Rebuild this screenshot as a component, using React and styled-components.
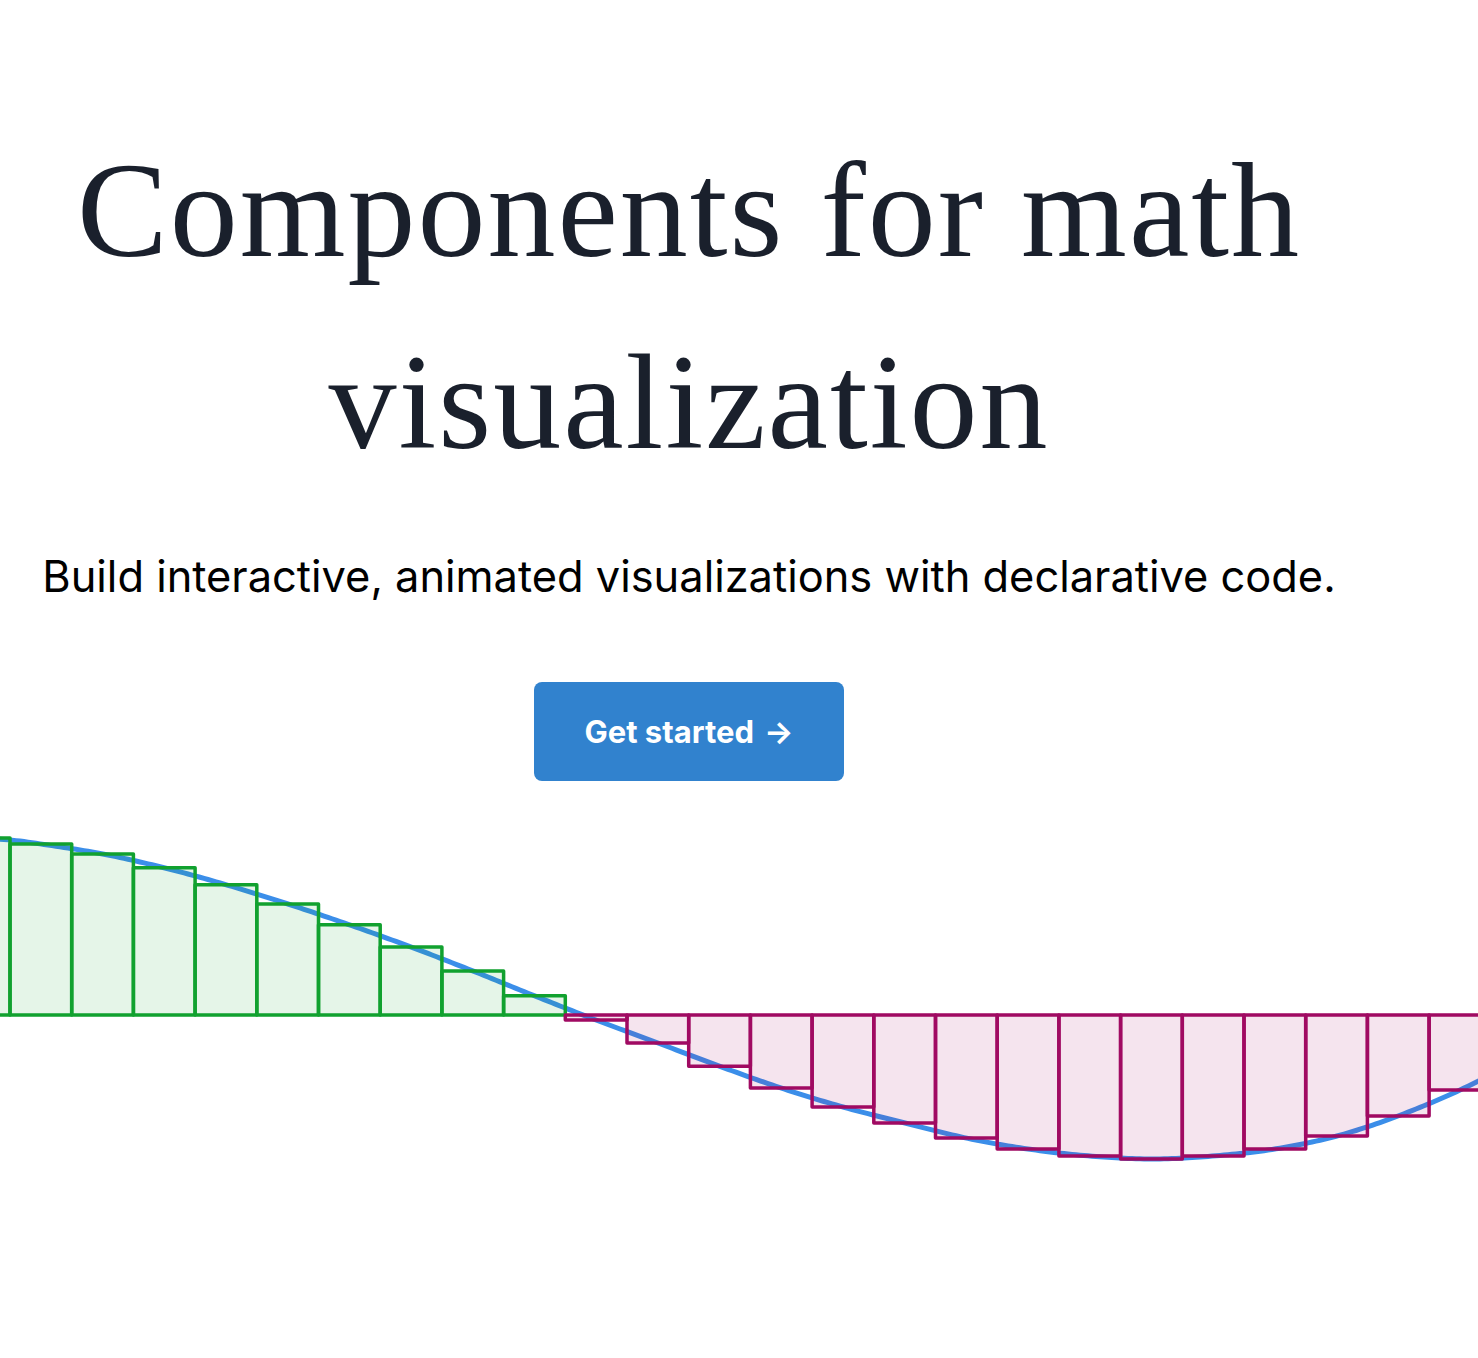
import React from "react"
import styled, { createGlobalStyle } from "styled-components"

const GlobalStyle = createGlobalStyle`
  html, body {
    margin: 0;
    padding: 0;
    background: #ffffff;
  }
`

const Page = styled.main`
  width: 100%;
  min-height: 1358px;
  overflow: hidden;
`

const Hero = styled.section`
  width: 1378px;
  display: flex;
  flex-direction: column;
  align-items: center;
  padding-top: 114px;
`

const Title = styled.h1`
  margin: 0;
  font-family: "Liberation Serif", "Times New Roman", serif;
  font-weight: 400;
  font-size: 136px;
  line-height: 192px;
  letter-spacing: 2px;
  color: #1a202c;
  text-align: center;
`

const Subtitle = styled.p`
  margin: 51px 0 0;
  font-family: Inter, "Noto Sans", sans-serif;
  font-size: 43.4px;
  line-height: 54px;
  color: #000000;
  text-align: center;
`

const StartButton = styled.a`
  margin-top: 79px;
  width: 310px;
  height: 99px;
  display: flex;
  align-items: center;
  justify-content: center;
  gap: 10px;
  border-radius: 8px;
  background: #3182ce;
  color: #ffffff;
  font-family: Inter, "Noto Sans", sans-serif;
  font-weight: 700;
  font-size: 31px;
  text-decoration: none;
  cursor: pointer;
`

const Chart = styled.svg`
  display: block;
  margin-top: 20px;
  width: 100%;
  height: 400px;
`

// measured curve values (px above the axis), Riemann midpoints mostly
const samples = [
  [-120, 179], [-60, 180], [-21, 177], [10, 175], [41, 171], [103, 161],
  [165, 147], [227, 130], [288, 111], [350, 90], [411, 68], [473, 44],
  [535, 19], [596, -5], [658, -28], [719, -51], [781, -73], [843, -92],
  [905, -108], [966, -123], [1028, -134], [1090, -141], [1152, -144],
  [1213, -141], [1275, -134], [1337, -121], [1398, -101], [1460, -75],
  [1520, -44], [1580, -10],
]

const f = (x) => {
  let i = 0
  while (i < samples.length - 2 && samples[i + 1][0] < x) i++
  const p0 = samples[Math.max(i - 1, 0)]
  const p1 = samples[i]
  const p2 = samples[i + 1]
  const p3 = samples[Math.min(i + 2, samples.length - 1)]
  const h = p2[0] - p1[0]
  const t = (x - p1[0]) / h
  const m1 = ((p2[1] - p0[1]) / (p2[0] - p0[0])) * h
  const m2 = ((p3[1] - p1[1]) / (p3[0] - p1[0])) * h
  const t2 = t * t
  const t3 = t2 * t
  return (
    (2 * t3 - 3 * t2 + 1) * p1[1] +
    (t3 - 2 * t2 + t) * m1 +
    (-2 * t3 + 3 * t2) * p2[1] +
    (t3 - t2) * m2
  )
}

const AXIS = 214
const DX = 61.7
const GREEN = "#11a12f"
const PINK = "#a00a62"
const BLUE = "#3b8ee9"

const curve = () => {
  const pts = []
  for (let x = -60; x <= 1540; x += 4) {
    pts.push(`${x},${(AXIS - f(x)).toFixed(2)}`)
  }
  return "M" + pts.join(" L")
}

const bars = () => {
  const out = []
  for (let k = -1; k < 24; k++) {
    const x0 = 10 + k * DX
    const v = f(x0 + DX / 2)
    out.push({ x: x0, v })
  }
  return out
}

const Bar = ({ x, v }) => {
  const color = v >= 0 ? GREEN : PINK
  return (
    <rect
      x={x}
      y={v >= 0 ? AXIS - v : AXIS}
      width={DX}
      height={Math.abs(v)}
      fill={color}
      fillOpacity={0.11}
      stroke={color}
      strokeWidth={3.5}
      strokeLinejoin="round"
    />
  )
}

const App = () => {
  return (
    <Page>
      <GlobalStyle />
      <Hero>
        <Title>
          Components for math
          <br />
          visualization
        </Title>
        <Subtitle>Build interactive, animated visualizations with declarative code.</Subtitle>
        <StartButton>
          Get started <span>→</span>
        </StartButton>
      </Hero>
      <Chart viewBox="0 0 1478 400" preserveAspectRatio="none">
        <path d={curve()} fill="none" stroke={BLUE} strokeWidth={5} />
        {bars().map((b, i) => (
          <Bar key={i} x={b.x} v={b.v} />
        ))}
      </Chart>
    </Page>
  )
}

export default App
